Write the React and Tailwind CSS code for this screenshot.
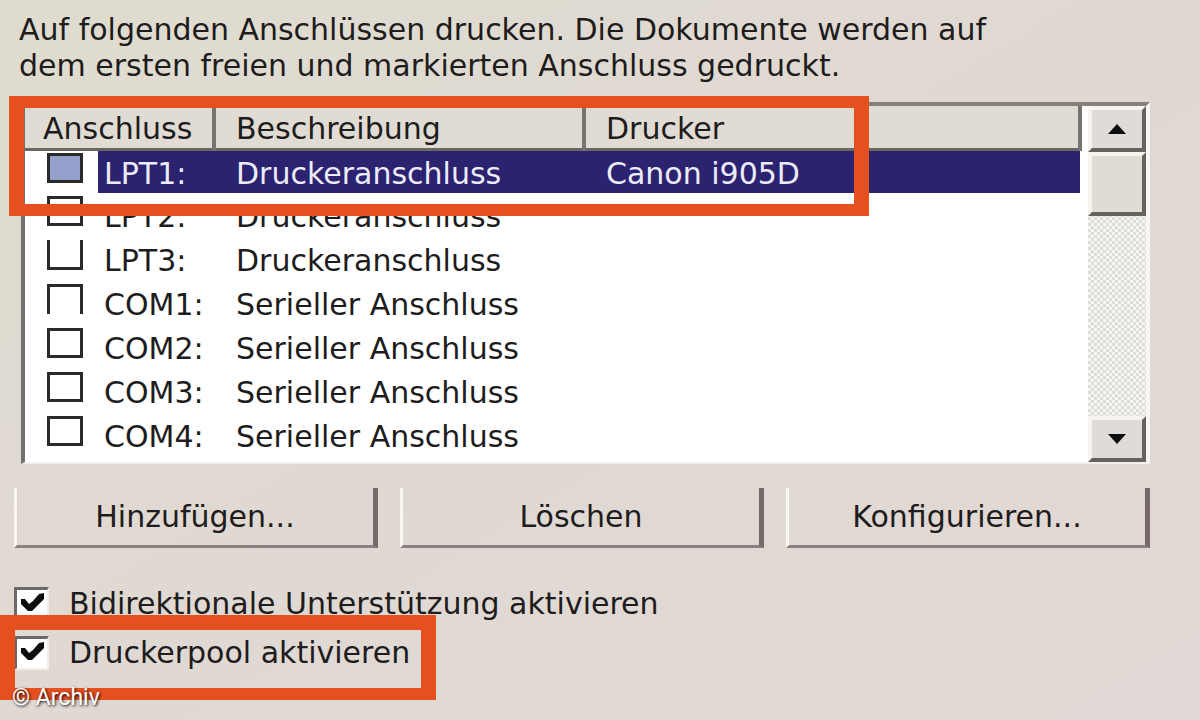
const ports = [
  { name: 'LPT1:', description: 'Druckeranschluss', printer: 'Canon i905D', selected: true, box: 'border-3 border-[#1c1c3c] bg-[#94a0cc]' },
  { name: 'LPT2:', description: 'Druckeranschluss', box: 'border-3' },
  { name: 'LPT3:', description: 'Druckeranschluss', box: 'border-3 border-t-0' },
  { name: 'COM1:', description: 'Serieller Anschluss', box: 'border-3 border-b-0' },
  { name: 'COM2:', description: 'Serieller Anschluss', box: 'border-3' },
  { name: 'COM3:', description: 'Serieller Anschluss', box: 'border-3' },
  { name: 'COM4:', description: 'Serieller Anschluss', box: 'border-3' },
];

function PortRow({ port }) {
  const tone = port.selected ? 'bg-[#2b2270] text-[#ececf8]' : '';
  const id = `port-${port.name.slice(0, 4)}`;
  return (
    <tr className="h-11">
      <td className="p-0 pb-2 pl-[22px] align-middle">
        <input
          id={id}
          type="checkbox"
          className={`block h-[30px] w-9 appearance-none border-[#2a2a2a] ${port.box}`}
        />
      </td>
      <td className={`p-0 pt-1 pl-[6px] ${tone}`}>
        <label htmlFor={id}>{port.name}</label>
      </td>
      <td className={`p-0 pt-1 pl-[22px] ${tone}`}>{port.description}</td>
      <td className={`p-0 pt-1 pl-[22px] ${tone}`}>{port.printer}</td>
    </tr>
  );
}

function ScrollButton({ label, points }) {
  return (
    <button
      type="button"
      aria-label={label}
      className="flex h-[46px] w-full shrink-0 items-center justify-center border-t-4 border-r-4 border-b-4 border-l-4 border-t-[#f6f4ef] border-r-[#66635f] border-b-[#66635f] border-l-[#f6f4ef] bg-[#dfdcd7]"
    >
      <svg viewBox="0 0 18 10" className="h-[10px] w-[18px]" fill="#0c0c0c">
        <polygon points={points} />
      </svg>
    </button>
  );
}

function PushButton({ children }) {
  return (
    <button
      type="button"
      className="flex h-[60px] flex-1 items-center justify-center border-r-5 border-b-3 border-l-3 border-r-[#75696a] border-b-[#8b8080] border-l-[#faf6f2]"
    >
      {children}
    </button>
  );
}

function Option({ id, children }) {
  return (
    <div className="flex h-[49px] items-center gap-5">
      <span className="relative block h-[34px] w-[35px]">
        <input
          id={id}
          type="checkbox"
          defaultChecked
          className="block size-full appearance-none border-t-3 border-r-2 border-b-2 border-l-3 border-t-[#6d6867] border-r-[#f2efea] border-b-[#f2efea] border-l-[#6d6867] bg-white"
        />
        <svg viewBox="0 0 35 34" className="pointer-events-none absolute inset-0" fill="#0d0d0d">
          <path d="M7 12 L11 12 L15 17 L19 14 L25 7 L30 6 L30 12 L18 24 L14 24 L7 17 Z" />
        </svg>
      </span>
      <label htmlFor={id}>{children}</label>
    </div>
  );
}

export default function App() {
  return (
    <main className="relative min-h-screen bg-[#e1d9d5] bg-linear-to-br from-[#dfdccf] via-[#e0d9d3] via-50% to-[#e2d8d5] pt-3 pr-[50px] pl-[14px] font-['DejaVu_Sans',sans-serif] text-[30px] leading-9 text-[#1e1c1c]">
      <p className="pl-[5px] whitespace-nowrap">
        Auf folgenden Anschlüssen drucken. Die Dokumente werden auf
        <br />
        dem ersten freien und markierten Anschluss gedruckt.
      </p>

      <section className="relative mt-[18px] ml-[7px] flex border-t-4 border-r-4 border-b-2 border-l-4 border-t-[#85807a] border-r-[#faf7f3] border-b-[#f3efeb] border-l-[#77716e] bg-white">
        <div className="min-h-[356px] flex-1">
          <table className="w-full table-fixed border-collapse text-left">
            <colgroup>
              <col className="w-[73px]" />
              <col className="w-[116px]" />
              <col className="w-[370px]" />
              <col />
            </colgroup>
            <thead>
              <tr className="h-[43px] border-b-3 border-[#6a6763] bg-[#e0dcd4]">
                <th colSpan={2} className="border-r-4 border-[#77736e] p-0 pt-1 pl-[18px] font-normal">Anschluss</th>
                <th className="border-r-4 border-[#77736e] p-0 pt-1 pl-5 font-normal">Beschreibung</th>
                <th className="border-r-4 border-[#77736e] p-0 pt-1 pl-5 font-normal">Drucker</th>
              </tr>
            </thead>
            <tbody>
              {ports.map((port) => (
                <PortRow key={port.name} port={port} />
              ))}
            </tbody>
          </table>
        </div>
        <div className="ml-[6px] flex w-[58px] flex-col bg-[repeating-conic-gradient(#dcdbd5_0_25%,#f8f7f3_0_50%)] bg-size-[6px_6px]">
          <ScrollButton label="Nach oben" points="9,0 18,10 0,10" />
          <div className="h-16 border-t-4 border-r-4 border-b-4 border-l-4 border-t-[#f6f4ef] border-r-[#66635f] border-b-[#66635f] border-l-[#f6f4ef] bg-[#dfdcd4]" />
          <div className="flex-1" />
          <ScrollButton label="Nach unten" points="0,0 18,0 9,10" />
        </div>
        <div className="pointer-events-none absolute -top-[10px] -left-4 h-[120px] w-[860px] border-x-15 border-y-12 border-[#e5501f]" />
      </section>

      <div className="mt-6 flex gap-[22px]">
        <PushButton>Hinzufügen...</PushButton>
        <PushButton>Löschen</PushButton>
        <PushButton>Konfigurieren...</PushButton>
      </div>

      <div className="relative mt-[31px]">
        <Option id="bidirectional">Bidirektionale Unterstützung aktivieren</Option>
        <Option id="pool">Druckerpool aktivieren</Option>
        <div className="pointer-events-none absolute top-9 -left-[14px] h-[85px] w-[436px] border-x-15 border-t-15 border-b-12 border-[#e5501f]" />
      </div>

      <footer className="absolute bottom-2 left-3 font-['Roboto',sans-serif] text-[23px] leading-7 text-white [text-shadow:1px_1px_3px_#000]">
        © Archiv
      </footer>
    </main>
  );
}
